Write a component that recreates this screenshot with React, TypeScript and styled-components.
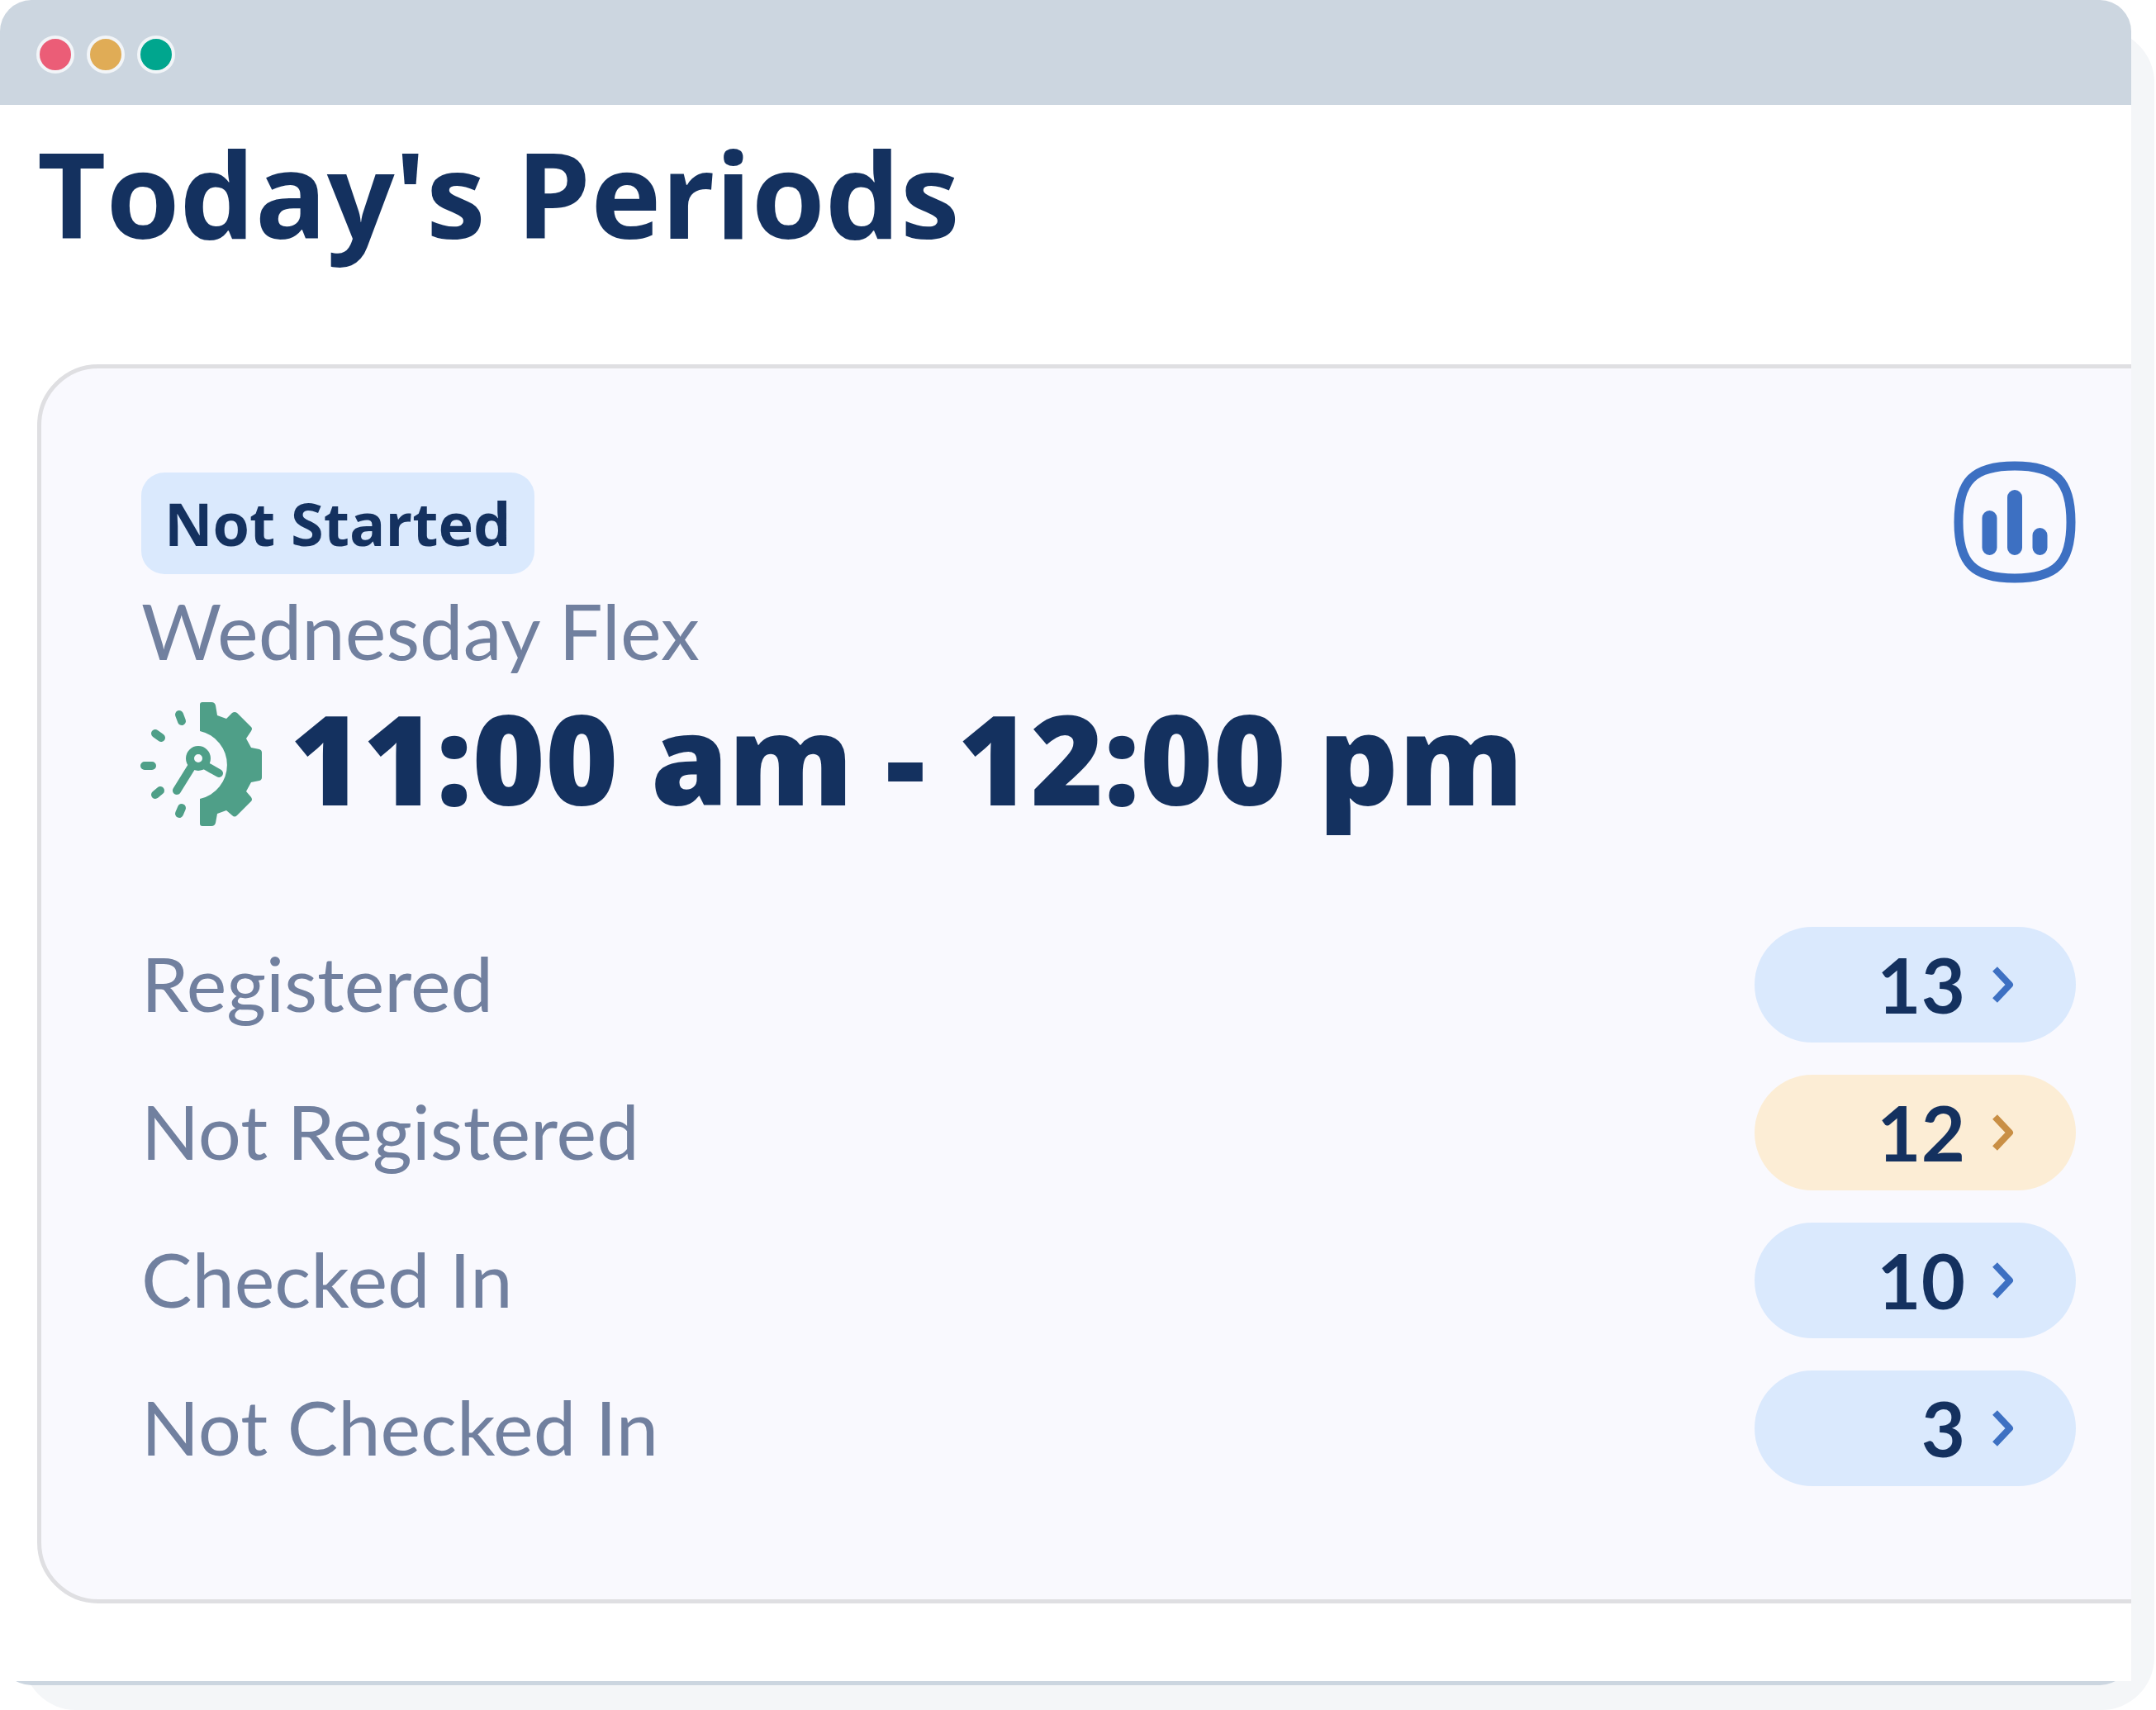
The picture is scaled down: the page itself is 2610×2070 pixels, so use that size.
import React from "react";
import styled, { createGlobalStyle } from "styled-components";

const color = {
  navy: "#14315f",
  slate: "#71809f",
  blue: "#3d70c2",
  amber: "#c98f45",
  green: "#4f9f88",
  paleBlue: "#dae9fd",
  paleAmber: "#fcedd5",
  frame: "#ccd6e0",
  backing: "#f4f6f8",
};

const displayFont = `"Open Sans", Lato, sans-serif`;

const GlobalStyle = createGlobalStyle`
  *, *::before, *::after { box-sizing: border-box; }
  body {
    margin: 0;
    background: #ffffff;
    color: ${color.navy};
    font-family: Lato, "Open Sans", sans-serif;
  }
  h1, h2, p, ul { margin: 0; padding: 0; }
  ul { list-style: none; }
  button { font: inherit; color: inherit; border: 0; cursor: pointer; }
`;

const Stage = styled.div`
  display: grid;
  grid-template-columns: minmax(0, 1fr);
  padding-right: 2px;
`;

const Backing = styled.div`
  grid-area: 1 / 1;
  margin: 36px 0 0 28px;
  border-radius: 64px;
  background: ${color.backing};
`;

const Window = styled.main`
  grid-area: 1 / 1;
  margin: 0 28px 30px 0;
  padding-bottom: 5px;
  border-radius: 38px;
  background: ${color.frame};
`;

const TitleBar = styled.header`
  display: flex;
  align-items: center;
  gap: 15px;
  height: 127px;
  padding: 4px 44px 0;
`;

const Dot = styled.span<{ $fill: string }>`
  width: 46px;
  height: 46px;
  border: 4px solid #f2f5f8;
  border-radius: 50%;
  background: ${(p) => p.$fill};
`;

const Content = styled.div`
  overflow: hidden;
  padding: 26px 0 94px 45px;
  background: #ffffff;
`;

const Heading = styled.h1`
  font-family: ${displayFont};
  font-size: 144px;
  line-height: 160px;
  font-weight: 700;
`;

const Card = styled.section`
  margin: 128px -120px 0 0;
  padding: 112px 182px 137px 121px;
  border: 5px solid #dfdfe2;
  border-radius: 74px;
  background: #f9f9fe;
`;

const CardHeader = styled.div`
  display: flex;
  justify-content: space-between;
  align-items: flex-start;
`;

const Summary = styled.div`
  display: flex;
  flex-direction: column;
  align-items: flex-start;
  gap: 18px;
  padding-top: 14px;
`;

const Badge = styled.span`
  padding: 0 28px;
  border-radius: 28px;
  background: ${color.paleBlue};
  font-family: ${displayFont};
  font-size: 72px;
  line-height: 123px;
  font-weight: 700;
`;

const PeriodName = styled.p`
  color: ${color.slate};
  font-size: 94px;
  line-height: 100px;
`;

const TimeRow = styled.div`
  display: flex;
  align-items: flex-end;
  gap: 30px;
`;

const TimeRange = styled.h2`
  font-family: ${displayFont};
  font-size: 151px;
  line-height: 172px;
  font-weight: 800;
`;

const IconButton = styled.button`
  display: flex;
  padding: 0;
  background: none;
`;

const StatList = styled.ul`
  display: grid;
  gap: 39px;
  margin-top: 119px;
`;

const StatRow = styled.li`
  display: flex;
  align-items: center;
  justify-content: space-between;
`;

const StatLabel = styled.span`
  padding-bottom: 4px;
  color: ${color.slate};
  font-size: 92px;
  line-height: 100px;
`;

const Pill = styled.button<{ $warn?: boolean }>`
  display: flex;
  align-items: center;
  justify-content: flex-end;
  gap: 32px;
  width: 389px;
  height: 140px;
  padding: 0 73px 0 0;
  border-radius: 70px;
  background: ${(p) => (p.$warn ? color.paleAmber : color.paleBlue)};
  font-size: 92px;
  line-height: 100px;
  font-weight: 700;

  svg {
    color: ${(p) => (p.$warn ? color.amber : color.blue)};
  }
`;

const Chevron = () => (
  <svg width="29" height="46" viewBox="0 0 29 46" fill="none" aria-hidden="true">
    <path d="M4 4 L22 23 L4 42" stroke="currentColor" strokeWidth="8" strokeLinejoin="round" />
  </svg>
);

const ChartIcon = () => (
  <svg width="148" height="148" viewBox="0 0 148 148" fill="none" aria-hidden="true">
    <path
      d="M74 6 C124 6 142 24 142 74 C142 124 124 142 74 142 C24 142 6 124 6 74 C6 24 24 6 74 6 Z"
      stroke={color.blue}
      strokeWidth="11"
    />
    <path d="M43.500 69 V105 M74 44 V105 M104.500 90 V105" stroke={color.blue} strokeWidth="18" strokeLinecap="round" />
  </svg>
);

const ClockGearIcon = () => (
  <svg width="150" height="152" viewBox="3 2 150 152" fill="none" overflow="visible" aria-hidden="true">
    <path
      fill={color.green}
      d="M74 4 Q74 1 77 1 H88 Q92 1 93 5 L95 17 L106 21 L113 14 Q116 12 119 14 L136 31 Q138 33 136 36 L130 45 L136 56 L146 58 Q149 59 149 62 V92 Q149 95 146 96 L136 98 L130 109 L136 116 Q138 119 136 121 L119 138 Q116 141 113 138 L106 132 L95 136 L93 147 Q92 151 88 151 H77 Q74 151 74 148 V118 A42 42 0 0 0 74 36 Z"
    />
    <g stroke={color.green} strokeWidth="10" strokeLinecap="round">
      <path d="M49 16 L52 24 M20 39 L27 44 M7 78 H16 M20 113 L26 108 M49 136 L52 129" />
    </g>
    <g stroke={color.green} strokeWidth="10" strokeLinecap="round">
      <circle cx="72" cy="69" r="10" />
      <path d="M64 79 L46 108 M81 78 L97 87" />
    </g>
  </svg>
);

const stats = [
  { label: "Registered", count: 13 },
  { label: "Not Registered", count: 12, warn: true },
  { label: "Checked In", count: 10 },
  { label: "Not Checked In", count: 3 },
];

export default function App() {
  return (
    <>
      <GlobalStyle />
      <Stage>
        <Backing />
        <Window>
          <TitleBar>
            <Dot $fill="#eb5d77" />
            <Dot $fill="#e0ac56" />
            <Dot $fill="#00a68e" />
          </TitleBar>
          <Content>
            <Heading>Today's Periods</Heading>
            <Card>
              <CardHeader>
                <Summary>
                  <Badge>Not Started</Badge>
                  <PeriodName>Wednesday Flex</PeriodName>
                  <TimeRow>
                    <ClockGearIcon />
                    <TimeRange>11:00 am - 12:00 pm</TimeRange>
                  </TimeRow>
                </Summary>
                <IconButton type="button" aria-label="View statistics">
                  <ChartIcon />
                </IconButton>
              </CardHeader>
              <StatList>
                {stats.map((s, i) => (
                  <StatRow key={s.label}>
                    <StatLabel id={`stat-${i}`}>{s.label}</StatLabel>
                    <Pill type="button" $warn={s.warn} aria-describedby={`stat-${i}`}>
                      {s.count}
                      <Chevron />
                    </Pill>
                  </StatRow>
                ))}
              </StatList>
            </Card>
          </Content>
        </Window>
      </Stage>
    </>
  );
}
